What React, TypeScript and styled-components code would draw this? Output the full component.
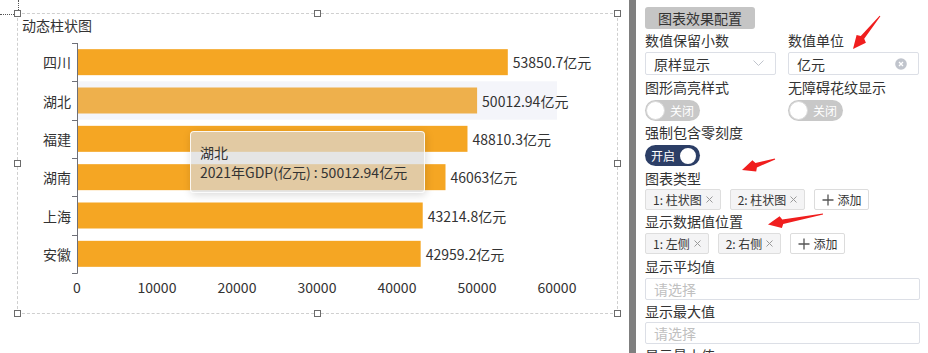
import React from "react";
import styled, { createGlobalStyle } from "styled-components";

const GlobalStyle = createGlobalStyle`
  html, body { margin: 0; padding: 0; background: #fff; }
  body { font-family: "Noto Sans CJK SC", "Liberation Sans", sans-serif; color: #333; }
`;

const FONT = '"Noto Sans CJK SC", "Liberation Sans", sans-serif';

const Page = styled.div`
  position: relative;
  display: flex;
  width: 928px;
  height: 353px;
  overflow: hidden;
  background: #fff;
`;

const Canvas = styled.div`
  position: relative;
  flex: none;
  width: 629px;
  box-sizing: border-box;
  padding: 13px 0 0 17px;
`;

const GuideH = styled.span`
  position: absolute;
  left: 0;
  top: 14px;
  width: 14px;
  border-top: 1px dotted #555;
`;

const GuideV = styled.span`
  position: absolute;
  left: 18px;
  top: 0;
  height: 10px;
  border-left: 1px dotted #555;
`;

const Divider = styled.div`
  flex: none;
  width: 7px;
  background: #7f7f7f;
`;

const Widget = styled.div`
  position: relative;
  width: 601px;
  height: 301px;
  box-sizing: border-box;
  border: 1px dashed #cfcfcf;
`;

type HX = "l" | "c" | "r";
type HY = "t" | "m" | "b";

const Handle = styled.span<{ $x: HX; $y: HY }>`
  position: absolute;
  width: 7px;
  height: 7px;
  box-sizing: border-box;
  border: 1px solid #6b6b6b;
  background: #fff;
  left: ${(p) => (p.$x === "l" ? "-4px" : p.$x === "c" ? "calc(50% - 3.5px)" : "calc(100% - 3px)")};
  top: ${(p) => (p.$y === "t" ? "-4px" : p.$y === "m" ? "calc(50% - 3.5px)" : "calc(100% - 3px)")};
`;

const ChartSvg = styled.svg`
  display: block;
  font-family: ${FONT};
`;

const Tooltip = styled.div`
  position: absolute;
  left: 172px;
  top: 117px;
  width: 235px;
  height: 62px;
  box-sizing: border-box;
  padding: 10px 9px;
  background: rgba(218, 218, 218, 0.7);
  border: 1px solid rgba(255, 255, 255, 0.85);
  border-radius: 4px;
  box-shadow: 1px 2px 8px rgba(0, 0, 0, 0.15);
  font-size: 14px;
  line-height: 20px;
  color: #333;
  white-space: nowrap;
`;

const TipLine = styled.div``;

const Panel = styled.div`
  flex: 1;
  display: flex;
  flex-direction: column;
  align-items: stretch;
  box-sizing: border-box;
  padding: 7px 8px 0 9px;
  font-size: 14px;
  color: #333;
`;

const TitleButton = styled.div`
  align-self: flex-start;
  height: 22px;
  line-height: 22px;
  padding: 0 13px;
  background: #c5c5c5;
  border-radius: 3px;
  font-size: 14px;
  color: #333;
`;

const Row = styled.div`
  display: grid;
  grid-template-columns: 131px 131px;
  column-gap: 12px;
`;

const Field = styled.div`
  display: flex;
  flex-direction: column;
  align-items: flex-start;
`;

const Label = styled.div<{ $mt: number }>`
  margin-top: ${(p) => p.$mt}px;
  height: 21px;
  line-height: 21px;
  font-size: 14px;
  color: #333;
  white-space: nowrap;
`;

const Box = styled.div<{ $mt: number }>`
  align-self: stretch;
  display: flex;
  align-items: center;
  justify-content: space-between;
  height: 23px;
  box-sizing: border-box;
  margin-top: ${(p) => p.$mt}px;
  padding: 0 11px 0 8px;
  border: 1px solid #dcdfe6;
  border-radius: 2px;
  background: #fff;
  font-size: 14px;
  color: #333;
`;

const Placeholder = styled.span`
  color: #c0c0c0;
`;

const SwitchTrack = styled.div<{ $on: boolean }>`
  display: flex;
  align-items: center;
  margin-top: 2px;
  width: 55px;
  height: 21px;
  box-sizing: border-box;
  padding: ${(p) => (p.$on ? "0 1px 0 6px" : "0 0 0 1px")};
  border-radius: 11px;
  background: ${(p) => (p.$on ? "#2c3e66" : "#c8c8c8")};
  color: #fff;
  font-size: 12px;
  white-space: nowrap;
`;

const Knob = styled.span<{ $on: boolean }>`
  flex: none;
  width: ${(p) => (p.$on ? "20px" : "19px")};
  height: ${(p) => (p.$on ? "20px" : "19px")};
  box-sizing: border-box;
  border-radius: 50%;
  background: #fff;
  border: ${(p) => (p.$on ? "2px solid #2c3e66" : "1px solid #dadada")};
`;

const SwitchText = styled.span<{ $on: boolean }>`
  flex: none;
  line-height: 21px;
  margin: ${(p) => (p.$on ? "0 3px 0 0" : "0 0 0 5px")};
`;

const TagRow = styled.div<{ $mt: number }>`
  display: flex;
  gap: 9px;
  margin-top: ${(p) => p.$mt}px;
`;

const Tag = styled.span`
  display: inline-flex;
  align-items: center;
  gap: 4px;
  height: 21px;
  box-sizing: border-box;
  padding: 0 7px;
  background: #f4f4f5;
  border: 1px solid #dedede;
  border-radius: 2px;
  font-size: 12px;
  color: #333;
  white-space: nowrap;
`;

const AddButton = styled.span`
  display: inline-flex;
  align-items: center;
  gap: 3px;
  height: 21px;
  box-sizing: border-box;
  padding: 0 7px;
  background: #fff;
  border: 1px solid #dcdcdc;
  border-radius: 2px;
  font-size: 12px;
  color: #333;
  white-space: nowrap;
`;

const ArrowLayer = styled.svg`
  position: absolute;
  left: 0;
  top: 0;
  pointer-events: none;
`;

const data = [
  { name: "四川", value: 53850.7, label: "53850.7亿元" },
  { name: "湖北", value: 50012.94, label: "50012.94亿元" },
  { name: "福建", value: 48810.3, label: "48810.3亿元" },
  { name: "湖南", value: 46063, label: "46063亿元" },
  { name: "上海", value: 43214.8, label: "43214.8亿元" },
  { name: "安徽", value: 42959.2, label: "42959.2亿元" },
];

const X0 = 77;
const Y0 = 43;
const Y1 = 273;
const BAND = (Y1 - Y0) / data.length;
const SCALE = 0.008;
const BAR_H = 26;
const ACTIVE = 1;

function Chart() {
  const ticks = [0, 10000, 20000, 30000, 40000, 50000, 60000];
  return (
    <ChartSvg width={599} height={299} viewBox="0 0 599 299">
      <g transform="translate(-18,-14)">
        <text x={22} y={25} fontSize={14} fill="#333" dominantBaseline="central">
          动态柱状图
        </text>
        <rect x={X0} y={Y0 + BAND * ACTIVE} width={480} height={BAND} fill="#f4f5fa" />
        {data.map((d, i) => {
          const cy = Y0 + BAND * (i + 0.5);
          const w = d.value * SCALE;
          return (
            <g key={d.name}>
              <rect
                x={X0}
                y={cy - BAR_H / 2}
                width={w}
                height={BAR_H}
                fill={i === ACTIVE ? "#eeb04c" : "#f5a623"}
              />
              <text x={X0 + w + 5} y={cy} fontSize={14} fill="#333" dominantBaseline="central">
                {d.label}
              </text>
              <text x={71} y={cy} fontSize={14} fill="#333" textAnchor="end" dominantBaseline="central">
                {d.name}
              </text>
            </g>
          );
        })}
        <line x1={X0 + 0.5} y1={Y0} x2={X0 + 0.5} y2={Y1 + 0.5} stroke="#6e7079" strokeWidth={1} />
        {Array.from({ length: data.length + 1 }).map((_, i) => {
          const y = Math.round(Y0 + BAND * i) + 0.5;
          return <line key={i} x1={72} y1={y} x2={X0 + 0.5} y2={y} stroke="#6e7079" strokeWidth={1} />;
        })}
        {ticks.map((t) => (
          <text
            key={t}
            x={X0 + t * SCALE}
            y={287}
            fontSize={14}
            fill="#333"
            textAnchor="middle"
            dominantBaseline="central"
          >
            {t}
          </text>
        ))}
      </g>
    </ChartSvg>
  );
}

function Chevron() {
  return (
    <svg width="11" height="7" viewBox="0 0 11 7">
      <polyline points="0.5,0.5 5.5,5.5 10.5,0.5" fill="none" stroke="#c0c4cc" strokeWidth="1" />
    </svg>
  );
}

function ClearIcon() {
  return (
    <svg width="12" height="12" viewBox="0 0 12 12">
      <circle cx="6" cy="6" r="5.8" fill="#c0c4cc" />
      <path d="M4 4 L8 8 M8 4 L4 8" stroke="#fff" strokeWidth="1.3" />
    </svg>
  );
}

function CloseX() {
  return (
    <svg width="7" height="7" viewBox="0 0 7 7">
      <path d="M0.5 0.5 L6.5 6.5 M6.5 0.5 L0.5 6.5" stroke="#9a9a9a" strokeWidth="1" />
    </svg>
  );
}

function PlusIcon() {
  return (
    <svg width="12" height="12" viewBox="0 0 12 12">
      <path d="M6 0.5 V11.5 M0.5 6 H11.5" stroke="#555" strokeWidth="1.3" />
    </svg>
  );
}

function Switch({ on }: { on: boolean }) {
  return (
    <SwitchTrack $on={on}>
      {on ? (
        <>
          <SwitchText $on>开启</SwitchText>
          <Knob $on />
        </>
      ) : (
        <>
          <Knob $on={false} />
          <SwitchText $on={false}>关闭</SwitchText>
        </>
      )}
    </SwitchTrack>
  );
}

function arrowPoints(tx: number, ty: number, hx: number, hy: number) {
  const headLen = 15;
  const headW = 12;
  const shaftW = 4.5;
  const tailW = 1;
  const dx = hx - tx;
  const dy = hy - ty;
  const L = Math.hypot(dx, dy);
  const ux = dx / L;
  const uy = dy / L;
  const nx = -uy;
  const ny = ux;
  const bx = hx - ux * headLen;
  const by = hy - uy * headLen;
  const pts: [number, number][] = [
    [tx + (nx * tailW) / 2, ty + (ny * tailW) / 2],
    [bx + (nx * shaftW) / 2, by + (ny * shaftW) / 2],
    [bx + (nx * headW) / 2 + ux * 2, by + (ny * headW) / 2 + uy * 2],
    [hx, hy],
    [bx - (nx * headW) / 2 + ux * 2, by - (ny * headW) / 2 + uy * 2],
    [bx - (nx * shaftW) / 2, by - (ny * shaftW) / 2],
    [tx - (nx * tailW) / 2, ty - (ny * tailW) / 2],
  ];
  return pts.map((p) => p.map((v) => v.toFixed(1)).join(",")).join(" ");
}

const arrows = [
  [880, 16, 853, 49],
  [775, 159, 742, 170],
  [823, 214, 768, 224.5],
];

export default function App() {
  return (
    <>
      <GlobalStyle />
      <Page>
        <Canvas>
          <GuideH />
          <GuideV />
          <Widget>
            <Chart />
            <Tooltip>
              <TipLine>湖北</TipLine>
              <TipLine>2021年GDP(亿元) : 50012.94亿元</TipLine>
            </Tooltip>
            <Handle $x="l" $y="t" />
            <Handle $x="c" $y="t" />
            <Handle $x="r" $y="t" />
            <Handle $x="l" $y="m" />
            <Handle $x="r" $y="m" />
            <Handle $x="l" $y="b" />
            <Handle $x="c" $y="b" />
            <Handle $x="r" $y="b" />
          </Widget>
        </Canvas>
        <Divider />
        <Panel>
          <TitleButton>图表效果配置</TitleButton>
          <Row>
            <Field>
              <Label $mt={1}>数值保留小数</Label>
              <Box $mt={1}>
                <span>原样显示</span>
                <Chevron />
              </Box>
            </Field>
            <Field>
              <Label $mt={1}>数值单位</Label>
              <Box $mt={1}>
                <span>亿元</span>
                <ClearIcon />
              </Box>
            </Field>
          </Row>
          <Row>
            <Field>
              <Label $mt={2}>图形高亮样式</Label>
              <Switch on={false} />
            </Field>
            <Field>
              <Label $mt={2}>无障碍花纹显示</Label>
              <Switch on={false} />
            </Field>
          </Row>
          <Label $mt={1}>强制包含零刻度</Label>
          <Switch on />
          <Label $mt={2}>图表类型</Label>
          <TagRow $mt={0}>
            <Tag>
              1: 柱状图 <CloseX />
            </Tag>
            <Tag>
              2: 柱状图 <CloseX />
            </Tag>
            <AddButton>
              <PlusIcon />
              添加
            </AddButton>
          </TagRow>
          <Label $mt={1}>显示数据值位置</Label>
          <TagRow $mt={1}>
            <Tag>
              1: 左侧 <CloseX />
            </Tag>
            <Tag>
              2: 右侧 <CloseX />
            </Tag>
            <AddButton>
              <PlusIcon />
              添加
            </AddButton>
          </TagRow>
          <Label $mt={2}>显示平均值</Label>
          <Box $mt={1}>
            <Placeholder>请选择</Placeholder>
          </Box>
          <Label $mt={1}>显示最大值</Label>
          <Box $mt={0}>
            <Placeholder>请选择</Placeholder>
          </Box>
          <Label $mt={1}>显示最小值</Label>
        </Panel>
        <ArrowLayer width={928} height={353} viewBox="0 0 928 353">
          {arrows.map(([tx, ty, hx, hy], i) => (
            <polygon key={i} points={arrowPoints(tx, ty, hx, hy)} fill="#f01e1e" />
          ))}
        </ArrowLayer>
      </Page>
    </>
  );
}
